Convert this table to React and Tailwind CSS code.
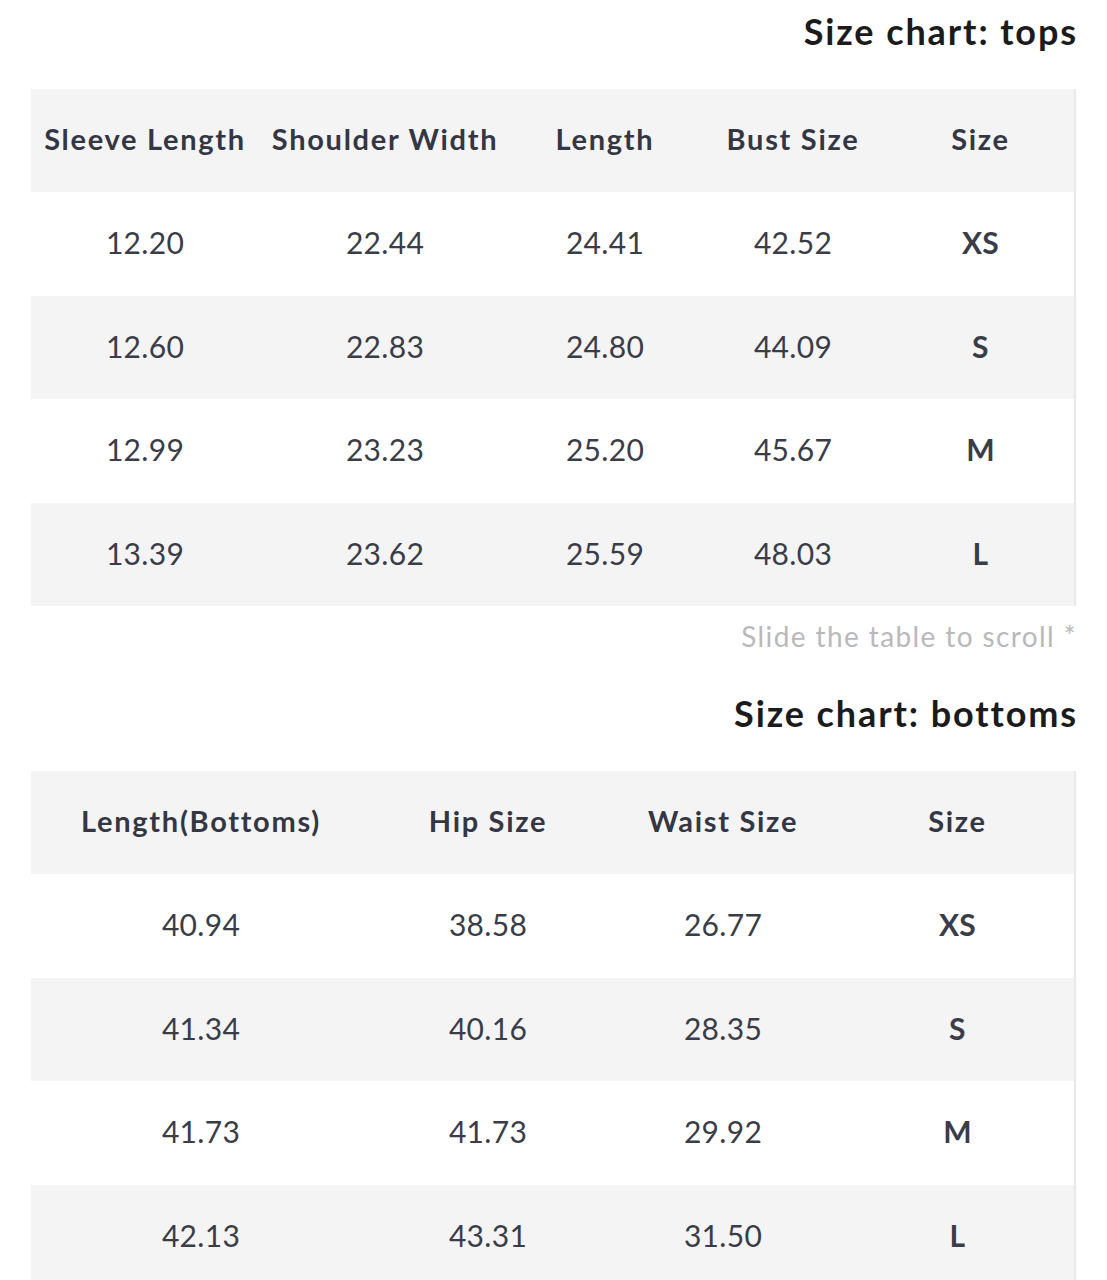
export default function App() {
  const tops = {
    cols: [
      { h: "Sleeve Length", w: "w-[228px]" },
      { h: "Shoulder Width", w: "w-[252px]" },
      { h: "Length", w: "w-[188px]" },
      { h: "Bust Size", w: "w-[188px]" },
      { h: "Size", w: "w-[187px]" },
    ],
    rows: [
      ["12.20", "22.44", "24.41", "42.52", "XS"],
      ["12.60", "22.83", "24.80", "44.09", "S"],
      ["12.99", "23.23", "25.20", "45.67", "M"],
      ["13.39", "23.62", "25.59", "48.03", "L"],
    ],
  };
  const bottoms = {
    cols: [
      { h: "Length(Bottoms)", w: "w-[340px]" },
      { h: "Hip Size", w: "w-[234px]" },
      { h: "Waist Size", w: "w-[236px]" },
      { h: "Size", w: "w-[233px]" },
    ],
    rows: [
      ["40.94", "38.58", "26.77", "XS"],
      ["41.34", "40.16", "28.35", "S"],
      ["41.73", "41.73", "29.92", "M"],
      ["42.13", "43.31", "31.50", "L"],
    ],
  };

  const Table = ({ data }) => (
    <div className="border-r-2 border-[#e9e9ea]">
      <div className="flex h-[103px] items-center bg-[#f4f4f5] pb-[3px]">
        {data.cols.map((c) => (
          <div
            key={c.h}
            className={`${c.w} shrink-0 whitespace-nowrap text-center text-[29px] font-bold tracking-[1.7px] text-[#343743]`}
          >
            {c.h}
          </div>
        ))}
      </div>
      {data.rows.map((r, i) => (
        <div
          key={i}
          className={`flex h-[103.5px] items-center pb-[2px] ${i % 2 === 1 ? "bg-[#f4f4f5]" : "bg-white"}`}
        >
          {r.map((v, j) => (
            <div
              key={j}
              className={`${data.cols[j].w} shrink-0 text-center text-[30px] tracking-[0.3px] text-[#3a3d48] ${
                j === r.length - 1 ? "font-bold" : "font-normal"
              }`}
            >
              {v}
            </div>
          ))}
        </div>
      ))}
    </div>
  );

  const Title = ({ children }) => (
    <div className="flex h-[89px] items-start justify-end pt-[7px]">
      <h2 className="mr-[-2px] text-[36px] font-bold leading-[48px] tracking-[1.9px] text-[#1b1b1d]">
        {children}
      </h2>
    </div>
  );

  return (
    <div
      className="w-[1107px] h-[1280px] overflow-hidden bg-white pl-[31px] pr-[31px]"
      style={{ fontFamily: "Lato, 'Noto Sans', sans-serif" }}
    >
      <Title>Size chart: tops</Title>
      <Table data={tops} />
      <div className="flex h-[76px] items-start justify-end pt-[16px]">
        <span className="mr-[-1px] text-[28px] leading-[28px] tracking-[1.4px] text-[#b9b9bb]">
          Slide the table to scroll *
        </span>
      </div>
      <Title>Size chart: bottoms</Title>
      <Table data={bottoms} />
    </div>
  );
}
